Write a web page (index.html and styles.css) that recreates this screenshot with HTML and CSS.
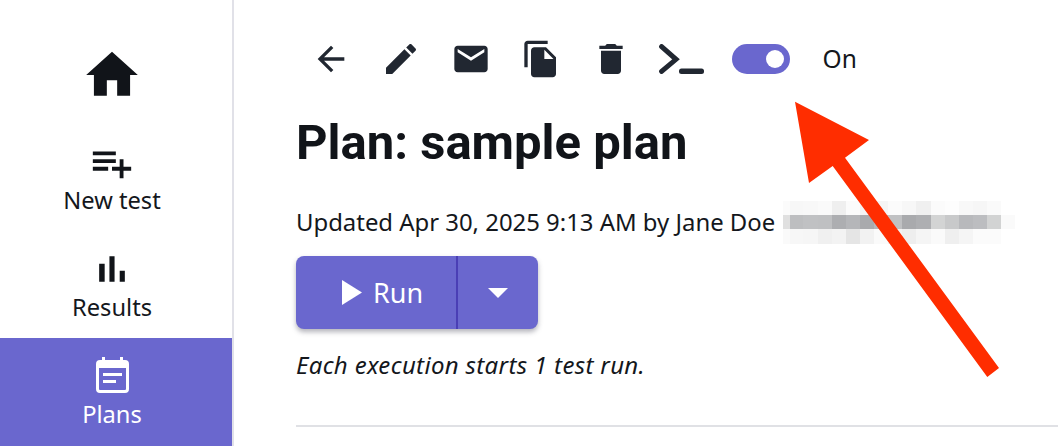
FILE: index.html
```html
<!DOCTYPE html>
<html lang="en">
<head>
<meta charset="utf-8">
<title>Plan: sample plan</title>
<link rel="stylesheet" href="styles.css">
</head>
<body>
<div class="shell">
  <nav class="sidebar">
    <a class="nav-item nav-home">
      <svg class="ico-home" viewBox="0 0 24 24"><path d="M10 20v-6h4v6h5v-8h3L12 3 2 12h3v8z"/></svg>
    </a>
    <a class="nav-item">
      <svg class="ico-add" viewBox="0 0 24 24"><path d="M14 10H2v2h12v-2zm0-4H2v2h12V6zm4 8v-4h-2v4h-4v2h4v4h2v-4h4v-2h-4zM2 16h8v-2H2v2z"/></svg>
      <span>New test</span>
    </a>
    <a class="nav-item">
      <svg class="ico-bars" viewBox="0 0 24 24"><path d="M5 9.2h3V19H5zM10.6 5h2.8v14h-2.8zm5.6 8H19v6h-2.8z"/></svg>
      <span>Results</span>
    </a>
    <a class="nav-item nav-active">
      <svg class="ico-cal" viewBox="0 0 33 36"><path fill-rule="evenodd" d="M6 0h3v3h15V0h3v3h2a4 4 0 0 1 4 4v25a4 4 0 0 1-4 4H4a4 4 0 0 1-4-4V7a4 4 0 0 1 4-4h2zM3 11v21a1 1 0 0 0 1 1h25a1 1 0 0 0 1-1V11zM7 16h19v3H7zM7 23h13v3H7z"/></svg>
      <span>Plans</span>
    </a>
  </nav>
  <main class="main">
    <div class="toolbar">
      <svg class="tool tool-back" viewBox="0 0 24 24"><path d="M20 11H7.83l5.59-5.59L12 4l-8 8 8 8 1.41-1.41L7.83 13H20v-2z"/></svg>
      <svg class="tool" viewBox="0 0 24 24"><path d="M3 17.25V21h3.75L17.81 9.94l-3.75-3.75L3 17.25zM20.71 7.04c.39-.39.39-1.02 0-1.41l-2.34-2.34c-.39-.39-1.02-.39-1.41 0l-1.83 1.83 3.75 3.75 1.83-1.83z"/></svg>
      <svg class="tool" viewBox="0 0 24 24"><path d="M20 4H4c-1.1 0-1.99.9-1.99 2L2 18c0 1.1.9 2 2 2h16c1.1 0 2-.9 2-2V6c0-1.1-.9-2-2-2zm0 4l-8 5-8-5V6l8 5 8-5v2z"/></svg>
      <svg class="tool" viewBox="0 0 24 24"><path d="M16 1H4c-1.1 0-2 .9-2 2v14h2V3h12V1zm-1 4l6 6v10c0 1.1-.9 2-2 2H7.99C6.89 23 6 22.1 6 21l.01-14c0-1.1.89-2 1.99-2h7zm-1 7h5.5L14 6.5V12z"/></svg>
      <svg class="tool" viewBox="0 0 24 24"><path d="M6 19c0 1.1.9 2 2 2h8c1.1 0 2-.9 2-2V7H6v12zM19 4h-3.5l-1-1h-5l-1 1H5v2h14V4z"/></svg>
      <svg class="tool-term" viewBox="0 0 45 30"><path class="term-chevron" d="M2.6 2.6 17 15.300 2.600 27.400"/><rect class="term-line" x="20" y="24.500" width="25" height="5.500" rx="2.500"/></svg>
      <span class="toggle"><span class="knob"></span></span>
      <span class="toggle-label">On</span>
    </div>
    <h1 class="title">Plan: sample plan</h1>
    <div class="meta">
      <span>Updated Apr 30, 2025 9:13 AM by Jane Doe</span>
      <svg class="blur" viewBox="0 0 233 14" shape-rendering="crispEdges">
        <g>
          <rect x="0" y="-14" width="7" height="14" fill="#fbfbfb"/><rect x="7" y="-14" width="13" height="14" fill="#f7f7f7"/><rect x="20" y="-14" width="15" height="14" fill="#f8f8f8"/><rect x="35" y="-14" width="14" height="14" fill="#fafafa"/><rect x="49" y="-14" width="14" height="14" fill="#efefef"/><rect x="63" y="-14" width="14" height="14" fill="#fbfbfb"/><rect x="77" y="-14" width="14" height="14" fill="#f3f3f3"/><rect x="91" y="-14" width="14" height="14" fill="#f5f5f5"/><rect x="105" y="-14" width="14" height="14" fill="#fbfbfb"/><rect x="119" y="-14" width="14" height="14" fill="#f7f7f7"/><rect x="133" y="-14" width="15" height="14" fill="#f0f0f0"/><rect x="148" y="-14" width="14" height="14" fill="#fbfbfb"/><rect x="162" y="-14" width="14" height="14" fill="#fdfdfd"/><rect x="176" y="-14" width="14" height="14" fill="#f8f8f8"/><rect x="190" y="-14" width="14" height="14" fill="#f6f6f6"/><rect x="204" y="-14" width="14" height="14" fill="#fafafa"/>
        </g>
        <g>
          <rect x="0" y="0" width="7" height="14" fill="#e0e0e0"/><rect x="7" y="0" width="13" height="14" fill="#bdbec0"/><rect x="20" y="0" width="15" height="14" fill="#c0c1c3"/><rect x="35" y="0" width="14" height="14" fill="#bfc0c2"/><rect x="49" y="0" width="14" height="14" fill="#adaeb1"/><rect x="63" y="0" width="14" height="14" fill="#b5b6b9"/><rect x="77" y="0" width="14" height="14" fill="#a9aaad"/><rect x="91" y="0" width="14" height="14" fill="#b5b6b9"/><rect x="105" y="0" width="14" height="14" fill="#c0c1c3"/><rect x="119" y="0" width="14" height="14" fill="#a9aaad"/><rect x="133" y="0" width="15" height="14" fill="#aeafb2"/><rect x="148" y="0" width="14" height="14" fill="#d3d4d4"/><rect x="162" y="0" width="14" height="14" fill="#c8c9ca"/><rect x="176" y="0" width="14" height="14" fill="#b8b9bc"/><rect x="190" y="0" width="14" height="14" fill="#bcbdc0"/><rect x="204" y="0" width="14" height="14" fill="#d2d3d3"/><rect x="218" y="0" width="14" height="14" fill="#fafafa"/>
        </g>
        <g>
          <rect x="0" y="14" width="7" height="15" fill="#fafafa"/><rect x="7" y="14" width="13" height="15" fill="#f7f7f7"/><rect x="20" y="14" width="15" height="15" fill="#f6f6f6"/><rect x="35" y="14" width="14" height="15" fill="#f0f0f0"/><rect x="49" y="14" width="14" height="15" fill="#f3f3f3"/><rect x="63" y="14" width="14" height="15" fill="#e5e5e5"/><rect x="77" y="14" width="14" height="15" fill="#f2f2f2"/><rect x="91" y="14" width="14" height="15" fill="#fafafa"/><rect x="105" y="14" width="14" height="15" fill="#f3f3f3"/><rect x="119" y="14" width="14" height="15" fill="#eeeeee"/><rect x="133" y="14" width="15" height="15" fill="#f5f5f5"/><rect x="148" y="14" width="14" height="15" fill="#fafafa"/><rect x="162" y="14" width="14" height="15" fill="#efefef"/><rect x="176" y="14" width="14" height="15" fill="#f5f5f5"/><rect x="190" y="14" width="14" height="15" fill="#fbfbfb"/><rect x="204" y="14" width="14" height="15" fill="#fbfbfb"/>
        </g>
      </svg>
    </div>
    <div class="split-button">
      <button class="run" type="button">
        <svg class="play" viewBox="0 0 20 25"><path d="M0 0 20 12.500 0 25z"/></svg>
        <span>Run</span>
      </button>
      <button class="caret" type="button">
        <svg class="caret-ico" viewBox="0 0 20 10"><path d="M0 0h20L10 10z"/></svg>
      </button>
    </div>
    <p class="note">Each execution starts 1 test run.</p>
    <hr class="rule">
  </main>
  <svg class="callout" viewBox="0 0 1058 446"><polygon points="795,101.700 869,140 845,157.700 999,368 987.300,377 832.700,166 809,183"/></svg>
</div>
</body>
</html>
```

FILE: styles.css
```css
* { box-sizing: border-box; }

html, body {
  margin: 0;
  height: 100%;
  overflow: hidden;
  background: #fff;
}

body {
  font-family: "Noto Sans", "Open Sans", sans-serif;
  color: #14171c;
}

.shell {
  position: relative;
  display: flex;
  width: 1058px;
  height: 446px;
  overflow: hidden;
}

.sidebar {
  flex: none;
  width: 234px;
  height: 446px;
  padding-top: 14px;
  border-right: 2px solid #e1e1e8;
  display: flex;
  flex-direction: column;
}

.nav-item {
  flex: none;
  height: 108px;
  padding-right: 8px;
  padding-bottom: 2px;
  display: flex;
  flex-direction: column;
  align-items: center;
  justify-content: center;
  font-size: 23.700px;
  line-height: 24px;
  fill: #111419;
}

.nav-home { justify-content: flex-start; padding-top: 30px; }
.ico-home { width: 62px; height: 62px; display: block; }
.ico-add { width: 46px; height: 46px; display: block; margin-top: 1px; margin-bottom: 2px; }
.ico-bars { width: 44px; height: 44px; display: block; margin-bottom: 4px; }
.ico-cal { width: 33px; height: 36px; display: block; margin-bottom: 9px; }

.nav-active {
  background: #6a67ce;
  color: #fff;
  fill: #fff;
}

.main {
  flex: 1;
  min-width: 0;
  padding: 39px 0 0 62px;
}

.toolbar {
  display: flex;
  align-items: center;
  gap: 30px;
  height: 40px;
  padding-left: 15px;
  fill: #212731;
}

.tool { width: 40px; height: 40px; display: block; flex: none; }

.tool-term {
  width: 45px;
  height: 30px;
  flex: none;
  margin-left: -2px;
  display: block;
}

.term-chevron {
  fill: none;
  stroke: #212731;
  stroke-width: 5;
  stroke-linecap: round;
  stroke-linejoin: miter;
}

.term-line { fill: #212731; }

.toggle {
  flex: none;
  width: 58px;
  height: 30px;
  margin-left: -2px;
  padding-right: 6px;
  border-radius: 15px;
  background: #6a67ce;
  display: flex;
  align-items: center;
  justify-content: flex-end;
}

.knob {
  width: 18px;
  height: 18px;
  border-radius: 50%;
  background: #fff;
}

.toggle-label {
  margin-left: 2.500px;
  font-size: 24.500px;
  line-height: 40px;
}

.title {
  margin: 34px 0 0;
  font-family: Roboto, sans-serif;
  font-weight: 700;
  font-size: 49px;
  line-height: 60px;
  letter-spacing: 0;
  color: #111419;
}

.meta {
  margin-top: 34px;
  display: flex;
  align-items: center;
  height: 30px;
  font-size: 23.900px;
  line-height: 30px;
  white-space: nowrap;
}

.blur {
  flex: none;
  width: 233px;
  height: 14px;
  margin-left: 8px;
  overflow: visible;
}

.split-button {
  margin-top: 19px;
  display: flex;
  width: 242px;
  height: 73px;
  border-radius: 8px;
  background: #6a67ce;
  box-shadow: 0 3px 5px rgba(40, 40, 60, 0.35);
  color: #fff;
  fill: #fff;
}

.split-button button {
  border: 0;
  padding: 0;
  background: none;
  color: inherit;
  fill: inherit;
  font: inherit;
  display: flex;
  align-items: center;
}

.split-button .run {
  width: 162px;
  padding-left: 46px;
  gap: 11px;
  font-size: 27px;
  border-right: 2px solid #4a3fb5;
}

.play { width: 20px; height: 25px; display: block; }

.split-button .caret {
  flex: 1;
  justify-content: center;
}

.caret-ico { width: 20px; height: 10px; display: block; }

.note {
  margin: 21px 0 0;
  font-size: 24px;
  line-height: 30px;
  letter-spacing: 0.330px;
  font-style: italic;
}

.rule {
  margin: 45px 0 0;
  border: 0;
  border-top: 2px solid #e0e1e5;
}

.callout {
  position: absolute;
  left: 0;
  top: 0;
  width: 1058px;
  height: 446px;
  fill: #ff2d00;
  pointer-events: none;
}
```
